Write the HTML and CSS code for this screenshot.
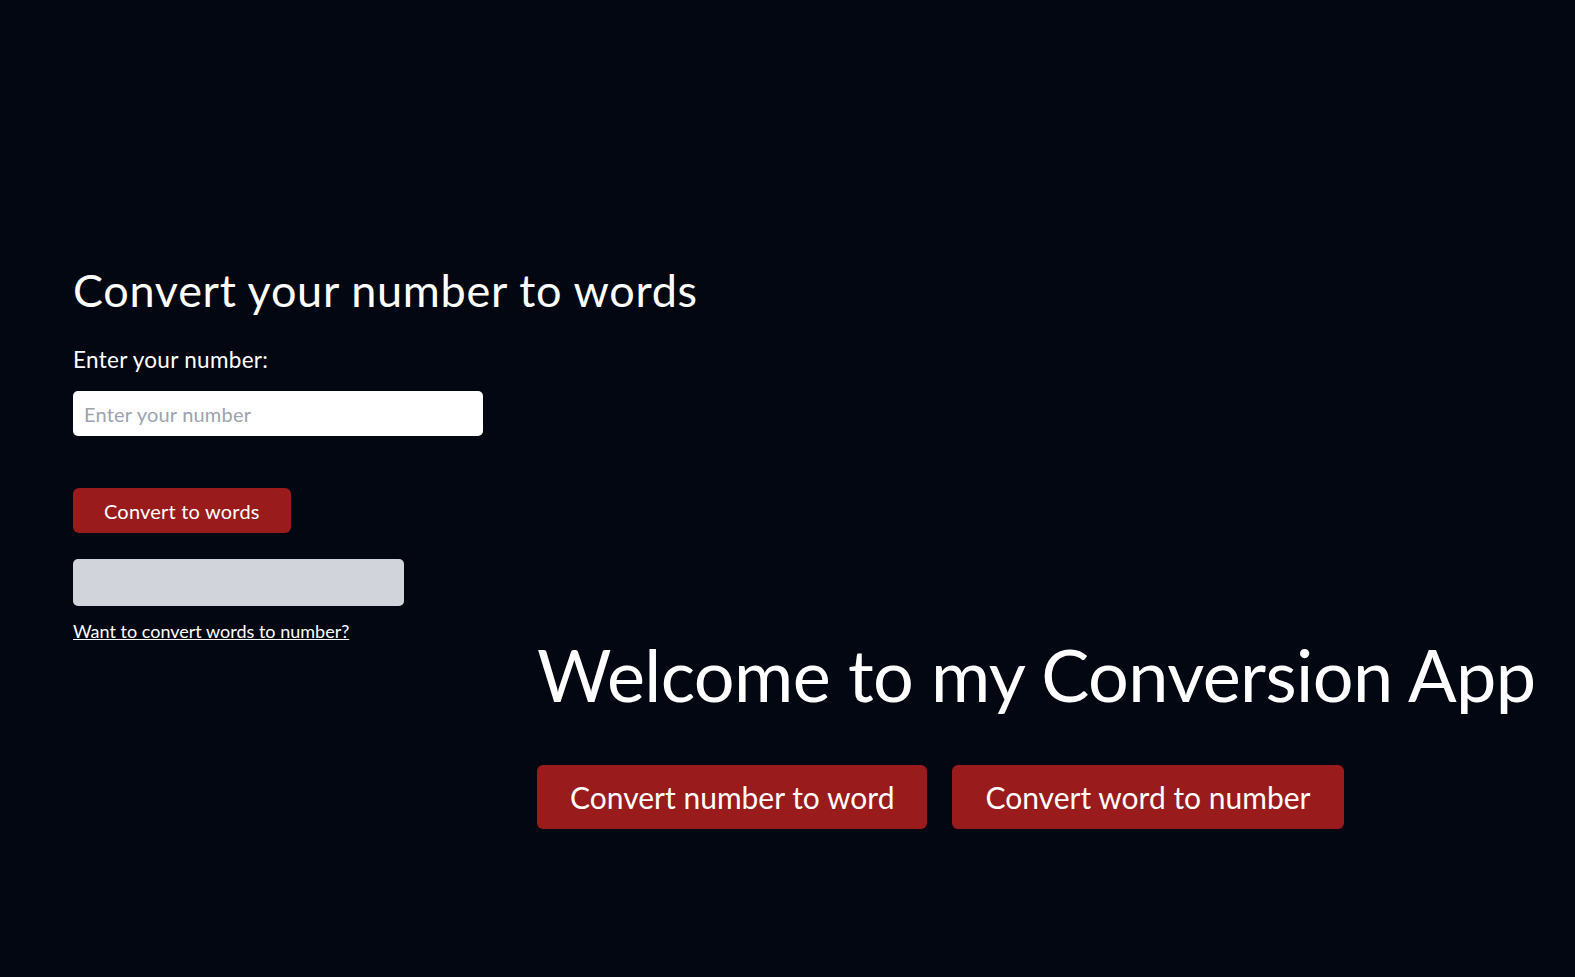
FILE: index.html
```html
<!DOCTYPE html>
<html lang="en">
<head>
<meta charset="utf-8">
<title>Conversion App</title>
<link rel="stylesheet" href="styles.css">
</head>
<body>
<main class="page">
  <section class="converter">
    <h2 class="converter-title">Convert your number to words</h2>
    <label class="field-label" for="num">Enter your number:</label>
    <input class="field-input" id="num" type="text" placeholder="Enter your number">
    <button class="btn btn-small" type="button">Convert to words</button>
    <div class="result"></div>
    <a class="switch-link" href="#">Want to convert words to number?</a>
  </section>
  <section class="welcome">
    <h1 class="welcome-title">Welcome to my Conversion App</h1>
    <div class="welcome-actions">
      <button class="btn btn-large" type="button">Convert number to word</button>
      <button class="btn btn-large" type="button">Convert word to number</button>
    </div>
  </section>
</main>
</body>
</html>
```
FILE: styles.css
```css
html, body {
  margin: 0;
  padding: 0;
  background: #030712;
}
body {
  font-family: Lato, "Open Sans", sans-serif;
  color: #ffffff;
}
.page {
  display: flex;
  box-sizing: border-box;
  min-height: 100vh;
  padding: 262px 0 0 73px;
}
.converter {
  display: flex;
  flex-direction: column;
  align-items: flex-start;
  width: 464px;
  flex-shrink: 0;
}
.converter-title {
  margin: 0;
  font-size: 45px;
  line-height: 56px;
  font-weight: 400;
  letter-spacing: 0.7px;
  white-space: nowrap;
}
.field-label {
  margin-top: 28px;
  font-size: 22.5px;
  line-height: 28px;
  letter-spacing: 0.3px;
}
.field-input {
  margin-top: 17px;
  box-sizing: border-box;
  width: 410px;
  height: 45px;
  border: none;
  border-radius: 5px;
  padding: 0 11px;
  font-family: inherit;
  font-size: 20px;
  letter-spacing: 0.2px;
  background: #ffffff;
  color: #111827;
}
.field-input::placeholder {
  color: #9ca3af;
}
.btn {
  border: none;
  background: #991b1b;
  color: #ffffff;
  font-family: inherit;
  cursor: pointer;
}
.btn-small {
  margin-top: 52px;
  height: 45px;
  padding: 0 31px;
  font-size: 20px;
  letter-spacing: 0.2px;
  border-radius: 6px;
}
.result {
  margin-top: 26px;
  width: 331px;
  height: 47px;
  border-radius: 5px;
  background: #d1d5db;
}
.switch-link {
  margin-top: 13px;
  font-size: 18px;
  line-height: 24px;
  color: #ffffff;
  text-decoration: underline;
}
.welcome {
  padding-top: 365px;
}
.welcome-title {
  margin: 0;
  font-size: 72px;
  line-height: 94px;
  font-weight: 400;
  letter-spacing: -0.6px;
  white-space: nowrap;
}
.welcome-actions {
  display: flex;
  gap: 25px;
  margin-top: 44px;
}
.btn-large {
  height: 64px;
  padding: 0 33px;
  font-size: 30px;
  border-radius: 6px;
}
```
